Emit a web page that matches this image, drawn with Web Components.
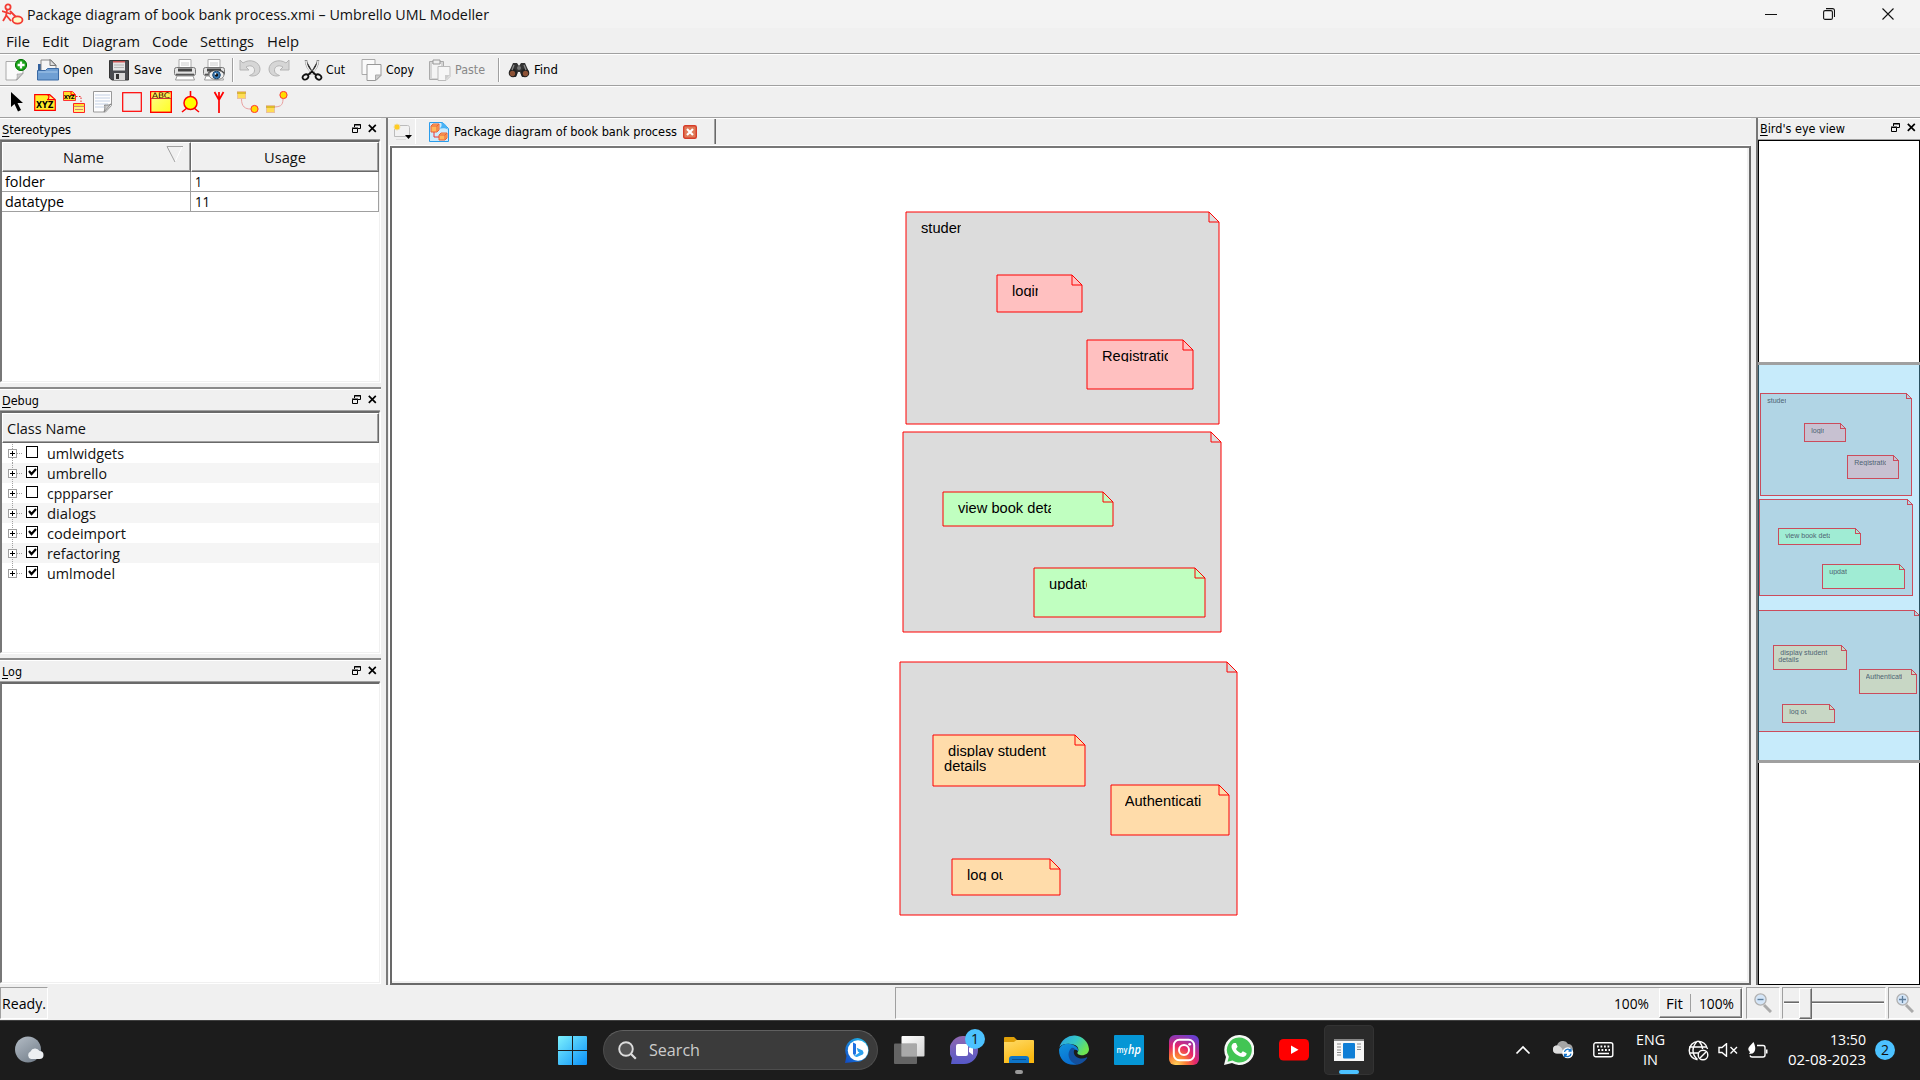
<!DOCTYPE html>
<html lang="en">
<head>
<meta charset="utf-8">
<title>Umbrello UML Modeller</title>
<style>
html,body{margin:0;padding:0;background:#f0f0f0;overflow:hidden}
</style>
</head>
<body>
<umbrello-desktop></umbrello-desktop>
<script>
const SEGOE='"Open Sans","Noto Sans",sans-serif';
const TAHOMA='"DejaVu Sans Condensed","DejaVu Sans",sans-serif';

/* Text stretched or squeezed horizontally to a fixed advance width. */
class FitText extends HTMLElement{
  connectedCallback(){
    if(this.shadowRoot)return;
    const w=+this.getAttribute('w'),size=this.getAttribute('size')||15;
    const fam=this.getAttribute('face')==='t'?TAHOMA:SEGOE;
    this.attachShadow({mode:'open'}).innerHTML=`<style>
      :host{display:block;flex:none;width:${w}px;height:20px;line-height:20px;font-family:${fam};font-size:${size}px;white-space:pre}
      span{display:inline-block;transform-origin:0 50%;white-space:pre}
      ::slotted(u){text-decoration-thickness:1px;text-underline-offset:2px}
      </style><span><slot></slot></span>`;
    const s=this.shadowRoot.querySelector('span'),m=s.getBoundingClientRect().width;
    if(m)s.style.transform=`scaleX(${w/m})`;
  }
}
customElements.define('fit-text',FitText);

const I={
app:[22,22,`<g fill="none" stroke="#f33b33" stroke-width="1.8"><circle cx="6" cy="4" r="2.6"/><path d="M5 7 4 13M0 8l9 3M4 13l-3 5M4 12l5 6M8 8l6 6"/><ellipse cx="15.5" cy="17" rx="5" ry="3.6" fill="#fffac8"/></g>`],
new:[22,22,`<path d="M1 2.500h17v12l-6 6.500H1z" fill="#fafafa" stroke="#aaa"/><path d="M18 14l-7 7c2-2 1-5 1-6 2 0 4 0 6-1z" fill="#ccc" stroke="#999" stroke-width=".6"/><circle cx="16" cy="6" r="5.600" fill="#19a319" stroke="#067206"/><path d="M16 2.600v7M12.600 6h7" stroke="#fff" stroke-width="2.300"/>`],
open:[22,22,`<path d="M1 5h5l2 3v10H1z" fill="#31609d"/><path d="M4 1h10l5 5v9H4z" fill="#f5f5f5" stroke="#888"/><path d="M13 .500l6 6h-6z" fill="#ddd" stroke="#777"/><path d="M.500 11.500h8l2-2h11v11.500h-21z" fill="#6f9fd3" stroke="#3a6aa5"/><path d="M1.500 13h19" stroke="#a8c9ea"/>`],
save:[20,22,`<path d="M.500 1.500h19v19.500H3l-2.500-2z" fill="#4a4c50" stroke="#333"/><path d="M4 2h12v9.500H4z" fill="#e4e4e4"/><path d="M4 2h12v1.500H4z" fill="#c55"/><path d="M5 6h10M5 8.500h10" stroke="#b4b4b4"/><path d="M5 14h11v7H5z" fill="#d8d8d8"/><path d="M7 15h3v5H7z" fill="#333"/>`],
print:[22,22,`<path d="M5 .500h12v9H5z" fill="#fff" stroke="#aaa"/><path d="M7 4h8M7 6h8" stroke="#ccc"/><rect x=".5" y="8.500" width="21" height="8" rx="2" fill="#e2e2e2" stroke="#777"/><path d="M4 9.500h14v3H4z" fill="#444"/><path d="M2 15.500h18" stroke="#555" stroke-width="1.600"/><path d="M3 17h16l1.500 4h-19z" fill="#fff" stroke="#999"/>`],
eye:[22,22,`<ellipse cx="13.500" cy="16" rx="7.500" ry="4.600" fill="#eee" stroke="#888"/><circle cx="13.500" cy="16" r="3.800" fill="#3a7cb8" stroke="#1b466e"/><circle cx="13.500" cy="16" r="1.700" fill="#111"/><circle cx="12.500" cy="14.800" r=".9" fill="#fff"/><path d="M5 14.500c4-5 13-5 16.500 0" fill="none" stroke="#444" stroke-width="1.200"/>`],
undo:[22,22,`<path d="M1 1v10h9L7 8c5-3 9 0 8.500 4-.4 2.500-2.500 3.500-5 4.500C15 18 21 16 21 10 21 3 11-1 4 4z" fill="#d6d6d6" stroke="#b4b4b4"/>`],
cut:[22,22,`<path d="M5 1c0 5 3 10 8 14M17 1c0 5-3 10-8 14" stroke="#8a8a8a" stroke-width="2.600"/><path d="M5 2c0 5 3 9 7 13M17 2c0 5-3 9-7 13" stroke="#f0f0f0" stroke-width="1.400"/><g fill="none" stroke="#111" stroke-width="1.800"><ellipse cx="4.500" cy="18" rx="3" ry="2.400" transform="rotate(-35 4.500 18)"/><ellipse cx="17.500" cy="18" rx="3" ry="2.400" transform="rotate(35 17.500 18)"/><path d="M7 16l4-3.500 4 3.500"/></g>`],
copy:[22,22,`<path d="M1 .500h13v15H1z" fill="#fafafa" stroke="#aaa"/><path d="M6 5.500h14v11l-5 5H6z" fill="#fafafa" stroke="#999"/><path d="M20 16l-5.500 5.500V16z" fill="#ccc" stroke="#aaa"/>`],
paste:[22,22,`<path d="M.500 2.500h14v18H.500z" fill="#d6d6d6" stroke="#aaa"/><path d="M3 5h9v14H3z" fill="#f4f4f4"/><path d="M4 1h7v4H4z" fill="#eee" stroke="#999"/><path d="M9 7.500h12v10l-4 4H9z" fill="#f6f6f6" stroke="#bbb"/><path d="M21 16l-5 5.500V16z" fill="#ccc"/>`],
find:[22,20,`<path d="M5 3h4l2 3 2-3h4l4 9-3 5h-4l-2-5h-2l-2 5H4l-3-5z" fill="#333"/><circle cx="5" cy="13" r="4.300" fill="#222"/><circle cx="17" cy="13" r="4.300" fill="#222"/><circle cx="4.500" cy="13.500" r="2.700" fill="#8d5236"/><circle cx="17.500" cy="13.500" r="2.700" fill="#8d5236"/><circle cx="11" cy="8" r="2" fill="#777"/><path d="M6 5l-2 5M16 5l2 5" stroke="#888" stroke-width="1.300"/>`],
arrow:[14,20,`<path d="M1 0v15l3.500-3L8 19.500l3-1.500-3.500-7H13z" fill="#000"/>`],
xyz:[22,17,`<path d="M.700.700h15l5.600 5v10.600H.700z" fill="#ffee2a" stroke="red" stroke-width="1.200"/><path d="M13 .700c3 0 2 5 0 5h8" fill="#fff28a" stroke="red" stroke-width="1.200"/><text x="10.700" y="14" text-anchor="middle" font-family="DejaVu Sans" font-weight="700" font-size="8.500" textLength="17.500" lengthAdjust="spacingAndGlyphs">XYZ</text>`],
xyz2:[22,22,`<path d="M.500.500h9l3 3v6H.500z" fill="#ffdf2a" stroke="#f33"/><path d="M8 .500v3h4" fill="none" stroke="#f00"/><text x="6.300" y="8.300" text-anchor="middle" font-family="DejaVu Sans" font-weight="700" font-size="5.500" textLength="11">XYZ</text><path d="M13 5.500h5V12" fill="none" stroke="#e22" stroke-dasharray="1.500 1.500"/><path d="M10.500 12.500h11v9h-11z" fill="#fff27d" stroke="#f22"/><path d="M11 13h10v2H11z" fill="#fd3"/><path d="M10.500 15.500h11M12 18.500h8" stroke="#c66" stroke-width=".8"/>`],
note:[19,22,`<path d="M.500.500h18v14l-6 6.500H.500z" fill="#fdfdfe" stroke="#999"/><path d="M2 4h15M2 7h15M2 10h15M2 13h13M2 16h9" stroke="#b4c4de" stroke-width=".8"/><path d="M18 13l-7 8c1-3 1-5 .5-7 3 .3 5 0 6.500-1z" fill="#ccc" stroke="#888"/>`],
rect:[20,20,`<rect x=".700" y=".700" width="18.600" height="18.600" fill="none" stroke="red" stroke-width="1.200"/>`],
abc:[22,22,`<defs><linearGradient id="g" x2="1" y2="1"><stop stop-color="#fffd90"/><stop offset="1" stop-color="#ff2"/></linearGradient></defs><rect x=".700" y=".700" width="20.600" height="20.600" fill="url(#g)" stroke="red" stroke-width="1.400"/><path d="M1 7.500h20" stroke="#c33"/><path d="M1.400 1.400h19v5.500h-19z" fill="#ffef50"/><text x="11" y="7" text-anchor="middle" font-family="DejaVu Sans" font-size="7.600" textLength="18" lengthAdjust="spacingAndGlyphs" fill="#300">ABC</text>`],
bulb:[19,22,`<path d="M9.500 0v5M1 21l5-4M18 21l-5-4" stroke="red" stroke-width="1.600"/><circle cx="9.500" cy="12" r="6.500" fill="#ff0" stroke="red" stroke-width="1.500"/>`],
fork:[12,22,`<path d="M6 22V1M1.500 1L6 9l4.500-8" fill="none" stroke="red" stroke-width="1.700"/>`],
link1:[22,22,`<path d="M4.500 8c0 8 4 10 9 10" fill="none" stroke="#e9a0a0"/><rect x=".5" y=".5" width="8" height="7" fill="#fd5" stroke="#e8c0a0"/><path d="M0 2h9" stroke="#b90"/><circle cx="17.500" cy="18" r="3.600" fill="#fd0" stroke="#f33"/>`],
link2:[22,22,`<path d="M17 8c0 7-3 8-11 8" fill="none" stroke="#e9a0a0"/><rect x=".5" y="14.500" width="8" height="7" fill="#fd5" stroke="#e8c0a0"/><path d="M0 16h9" stroke="#b90"/><circle cx="17.500" cy="4" r="3.600" fill="#fd0" stroke="#f33"/>`],
float:[9,9,`<g fill="none" stroke="#000"><path d="M2.500 3V.500h6v4H6M2 1h7" /><path d="M.500 4.500h5v4h-5zM0 4h6"/></g>`],
x:[9,9,`<path d="M.8.800l7 7M7.800.800l-7 7" stroke="#000" stroke-width="1.700"/>`],
sort:[18,17,`<path d="M16 1L9 16" stroke="#fff" fill="none"/><path d="M9 16L1 .500h16" stroke="#a0a0a0" fill="none"/>`],
newtab:[20,18,`<path d="M2.500 2.500h12c1.500 0 2 1 2 2v9h-15v-10z" fill="#f2f2f2" stroke="#bbb"/><path d="M3 16.500h10" stroke="#ddd"/><circle cx="4" cy="4" r="3" fill="#fc2" stroke="#eda"/><path d="M12 12h7l-3.500 4z" fill="#000"/>`],
pkg:[20,20,`<path d="M.500.500h13l6 6v13H.500z" fill="#cdebfb" stroke="#2a9dec"/><path d="M12 .500c6 1 6 5 7 7-3-2-7-1-9-1 3-1 3-4 2-6z" fill="#4ab3f5"/><g fill="#ffb85a" stroke="#e8603a"><path d="M2 4l2-2h6v6l-2 2H2z"/><path d="M2 4h6v6M8 4l2-2"/><path d="M10 13l2-2h6v5l-2 2h-6z"/><path d="M10 13h6v5M16 13l2-2"/></g><path d="M5 10v5h5" fill="none" stroke="#e33"/>`],
tabclose:[14,14,`<rect x=".7" y=".7" width="12.600" height="12.600" rx="1.500" fill="#e07a58" stroke="#d63c28" stroke-width="1.400"/><path d="M4 4l6 6M10 4l-6 6" stroke="#fff" stroke-width="2.200"/>`],
min:[12,12,`<path d="M0 6.500h12" stroke="#111"/>`],
max:[12,12,`<rect x=".6" y="2.600" width="8.800" height="8.800" rx="1.500" fill="none" stroke="#111" stroke-width="1.100"/><path d="M3 .6h6.500c1.200 0 2 .8 2 2V9" fill="none" stroke="#111" stroke-width="1.100"/>`],
close:[12,12,`<path d="M.500.500l11 11M11.500.500l-11 11" stroke="#111" stroke-width="1.100"/>`],
zout:[18,20,`<path d="M10 12l7 7" stroke="#aaa" stroke-width="3"/><circle cx="6.500" cy="6.500" r="5.600" fill="#d4e5f7" stroke="#b0b0b0" stroke-width="1.300"/><path d="M3.500 6.500h6" stroke="#5e7e9c" stroke-width="1.400"/>`],
zin:[18,20,`<path d="M10 12l7 7" stroke="#aaa" stroke-width="3"/><circle cx="6.500" cy="6.500" r="5.600" fill="#d4e5f7" stroke="#b0b0b0" stroke-width="1.300"/><path d="M3 6.500h7M6.500 3v7" stroke="#5e7e9c" stroke-width="1.300"/>`],
weather:[30,28,`<defs><linearGradient id="g" x2=".7" y2="1"><stop stop-color="#b4bdc6"/><stop offset="1" stop-color="#77828e"/></linearGradient></defs><circle cx="13" cy="13.500" r="13" fill="url(#g)"/><path d="M16 23a4 4 0 0 1-.5-7.500 5 5 0 0 1 9-.5 4 4 0 0 1 0 8z" fill="#eceff2"/>`],
win:[29,29,`<defs><linearGradient id="g" x2="1" y2="1"><stop stop-color="#7df1fd"/><stop offset="1" stop-color="#0a90f8"/></linearGradient></defs><path d="M0 1q0-1 1-1h13v14H0zM15 0h13q1 0 1 1v13H15zM0 15h14v14H1q-1 0-1-1zM15 15h14v13q0 1-1 1H15z" fill="url(#g)"/>`],
search:[19,19,`<circle cx="8" cy="8" r="6.800" fill="#555" stroke="#ddd" stroke-width="1.900"/><path d="M12.800 12.800l5 5" stroke="#ddd" stroke-width="2.200"/>`],
bing:[25,25,`<defs><linearGradient id="g" x1="1" x2="0" y2="1"><stop stop-color="#22c3ee"/><stop offset="1" stop-color="#1148c4"/></linearGradient></defs><path d="M12.500 0a12.500 12 0 1 1-3 24L0 25l1.500-7A12.500 12.500 0 0 1 12.500 0z" fill="url(#g)"/><circle cx="13" cy="12.500" r="10.200" fill="#fff"/><path d="M8 4.500l3 1.500v9.500l-1 1.800L8 16z" fill="#1e6fe0"/><path d="M10 17.500l4.500-3-1.500-.8-1.300-4 6 2.800q1.500 2 0 4L12 19q-2.500.5-4-3z" fill="#2ba0ee"/>`],
taskview:[31,29,`<defs><linearGradient id="g" x2="1" y2="1"><stop stop-color="#fff"/><stop offset="1" stop-color="#d4d4d4"/></linearGradient></defs><rect x="7.500" width="23" height="20.500" rx="1" fill="url(#g)"/><rect y="7.500" width="23" height="20.500" rx="1" fill="#777" opacity=".8"/><path d="M7.500 8H23v12.500H7.500z" fill="#a9a9a9"/>`],
chat:[29,29,`<defs><linearGradient id="g" x2="0" y2="1"><stop stop-color="#9068b0"/><stop offset="1" stop-color="#5558c8"/></linearGradient></defs><path d="M14 0a14 14 0 1 1 0 28H1l1-6A14 14 0 0 1 14 0z" fill="url(#g)"/><rect x="6" y="8" width="12" height="12" rx="2" fill="#fff"/><path d="M19 12l4-3v10l-4-3z" fill="#fff"/>`],
folder:[30,27,`<defs><linearGradient id="g" x2=".5" y2="1"><stop stop-color="#ffdb68"/><stop offset="1" stop-color="#fbb810"/></linearGradient></defs><path d="M0 1q0-1 1-1h9l3 3-2 4H0z" fill="#e0a008"/><path d="M0 5h10l2.500-2H29q1 0 1 1v22H0z" fill="url(#g)"/><path d="M5 26v-4q0-3 3-3h14q3 0 3 3v4z" fill="#0e75c8"/><path d="M8 22.500h14" stroke="#0a4f90"/>`],
edge:[30,30,`<defs><linearGradient id="g" x2="1" y2=".5"><stop offset=".1" stop-color="#2ba4e2"/><stop offset=".55" stop-color="#35c8c4"/><stop offset="1" stop-color="#6ee452"/></linearGradient><linearGradient id="b" x2=".4" y2="1"><stop stop-color="#0f93dd"/><stop offset="1" stop-color="#0a6fd0"/></linearGradient></defs><path d="M.5 12A15 15 0 0 1 30 14c0 5-5 7-9 6-2-.5-3-1.500-2.500-2.500 2-3 .5-7-4-8C9 8 3 9 .5 12z" fill="url(#g)"/><path d="M0 15C1 9 8 7.500 13.500 9.500c4 1.500 6.500 4.500 5.500 7-1-3-7-3-8 2-.7 4 2 8.500 7 11C8 31.500 0 25 0 15z" fill="url(#b)"/><path d="M12.500 13c-5 4-4 14 5.500 16.700 4-.7 8-3 10.200-6.700.3-.6-.3-.8-.8-.5-5 2.500-11 .5-12.400-4-.5-2 0-3.500 1-4.500-1.200-1-2.500-1.500-3.500-1z" fill="#134f9d"/>`],
hp:[30,30,`<rect width="30" height="30" rx="1" fill="#0596d5"/><text x="2.500" y="17.500" font-family="Open Sans" font-weight="600" font-size="9" fill="#fff" textLength="11" lengthAdjust="spacingAndGlyphs">my</text><text x="14" y="18.500" font-family="Open Sans" font-weight="600" font-style="italic" font-size="13" fill="#fff" textLength="13" lengthAdjust="spacingAndGlyphs">hp</text>`],
insta:[30,30,`<defs><radialGradient id="g" cx=".25" cy="1" r="1.100"><stop stop-color="#ffd65a"/><stop offset=".3" stop-color="#fb7a35"/><stop offset=".58" stop-color="#e5266c"/><stop offset="1" stop-color="#6a3fd0"/></radialGradient></defs><rect width="30" height="30" rx="6" fill="url(#g)"/><g fill="none" stroke="#fff" stroke-width="2"><rect x="4.800" y="4.800" width="20.400" height="20.400" rx="5.500"/><circle cx="15" cy="15" r="5"/></g><circle cx="20.700" cy="9.300" r="1.400" fill="#fff"/>`],
wa:[30,30,`<path d="M15 0a15 15 0 1 1-7 28L0 30l2-8A15 15 0 0 1 15 0z" fill="#f4f8f4"/><path d="M15 2.500a12.500 12.500 0 1 1-6.500 23L3.500 26.800l1.400-5A12.500 12.500 0 0 1 15 2.500z" fill="#42c554"/><path d="M10 8l2 0 1.600 3.800L12 14c1 2 3 3.500 5 4.300l1.800-2 3.800 2c0 3-3 4-5 3.500C12 20.500 8 16 7.500 12c0-2 1-3.500 2.500-4z" fill="#fff"/>`],
yt:[30,22,`<rect width="30" height="21.500" rx="4.500" fill="#f00"/><path d="M12 6.500l7.500 4.300L12 15z" fill="#fff"/>`],
uml:[30,22,`<rect width="30" height="22" fill="#f7f7f7"/><path d="M0 0h30v2H0z" fill="#888"/><path d="M3 5h4M3 8h4M3 11h4M3 13.500h4M3 16h4M23 5h4M23 8h4M23 10.500h4" stroke="#888"/><rect x="9" y="4" width="12" height="15.500" rx="1" fill="#0f7ed6"/>`],
chev:[16,10,`<path d="M1.500 8.500L8 2l6.500 6.500" fill="none" stroke="#fff" stroke-width="1.700"/>`],
cloud:[21,18,`<path d="M4 12.500a4 4 0 0 1 0-8A6 6 0 0 1 15 3a5 5 0 0 1 2 9.500z" fill="#a5a5a5"/><path d="M4 12.500a4 4 0 0 1 0-8c3 0 5 2 7 8z" fill="#ddd"/><circle cx="14.800" cy="11.800" r="5.500" fill="#fff"/><path d="M11.500 11a3.400 3.400 0 0 1 6-1.500M18 12.600a3.400 3.400 0 0 1-6 1.700M18 7.500v2.500h-2.500M11.500 16v-2.500H14" fill="none" stroke="#1673c8" stroke-width="1.300"/>`],
kbd:[21,16,`<rect x=".8" y=".8" width="19" height="14" rx="2" fill="none" stroke="#fff" stroke-width="1.400"/><path d="M4 4.500h13M5 8h12" stroke="#fff" stroke-width="1.800" stroke-dasharray="1.800 1.700"/><path d="M5 11.500h11" stroke="#fff" stroke-width="1.500"/>`],
globe:[21,21,`<g fill="none" stroke="#fff" stroke-width="1.400"><path d="M19.500 9a9.200 9.200 0 1 0-10 10.700M1 7h18M1 13h9M9.500 1c-6 6-6 13 0 18.500M10.500 1c3 3 4 6 4 8"/><circle cx="15" cy="15" r="4.800"/><path d="M12 18l6-6"/></g>`],
mute:[20,14,`<path d="M1 4.500h3l4.500-3.800v12.600L4 9.500H1z" fill="none" stroke="#fff" stroke-width="1.400"/><path d="M12.500 4l6.500 6.500M19 4l-6.500 6.500" stroke="#fff" stroke-width="1.400"/>`],
batt:[21,17,`<path d="M10 3.500h6q2 0 2 2v7.500q0 2-2 2H5q-1.500 0-2-1.500" fill="none" stroke="#fff" stroke-width="1.400"/><path d="M19 7.500h1.500v4H19z" fill="#fff"/><path d="M6.500 0c2 4 3 9-1 11.500l-3.500.5 1-2C-1 6 3 4.500 6.500 0z" fill="#fff"/>`]
};
I.preview=[22,22,I.print[2]+I.eye[2]];
I.redo=[22,22,`<g transform="matrix(-1 0 0 1 22 0)">${I.undo[2]}</g>`];

class UiIcon extends HTMLElement{
  connectedCallback(){
    if(this.shadowRoot)return;
    const [w,h,body]=I[this.getAttribute('name')];
    this.attachShadow({mode:'open'}).innerHTML=`<style>:host{display:block;flex:none;width:${w}px;height:${h}px}svg{display:block}</style><svg width="${w}" height="${h}" viewBox="0 0 ${w} ${h}">${body}</svg>`;
  }
}
customElements.define('ui-icon',UiIcon);

/* Fixed-width slot of a bar; content is vertically centred. */
class BarCell extends HTMLElement{
  connectedCallback(){
    if(this.shadowRoot)return;
    this.attachShadow({mode:'open'}).innerHTML=`<style>:host{display:flex;flex:none;align-items:center;width:${this.getAttribute('w')}px}</style><slot></slot>`;
  }
}
customElements.define('bar-cell',BarCell);
const ic=(n,w)=>`<bar-cell w="${w}"><ui-icon name="${n}"></ui-icon></bar-cell>`;
const tx=(t,tw,w,size,face,extra='')=>`<bar-cell w="${w}"><fit-text w="${tw}" size="${size}" face="${face||''}" ${extra}>${t}</fit-text></bar-cell>`;

function define(name,html){
  customElements.define(name,class extends HTMLElement{
    connectedCallback(){ if(!this.shadowRoot)this.attachShadow({mode:'open'}).innerHTML=typeof html==='function'?html(this):html; }
  });
}

define('title-bar',`<style>:host{display:flex;align-items:center;height:28px;background:#f3f3f3;padding-left:2px;color:#111}.g{flex:1}</style>
${ic('app',25)}${tx('Package diagram of book bank process.xmi – Umbrello UML Modeller',462,470,14.7)}<div class="g"></div>${ic('min',58)}${ic('max',59)}${ic('close',38)}`);

define('menu-bar',`<style>:host{display:flex;align-items:center;height:25px;padding-left:6px;background:#f0f0f0;border-bottom:1px solid #a0a0a0;color:#111}</style>
${[['File',24,36],['Edit',27,39.5],['Diagram',58,70.5],['Code',36,48],['Settings',54,66.5],['Help',32,40]].map(a=>tx(a[0],a[1],a[2],15)).join('')}`);

const sep=w=>`<bar-cell w="${w}"><i></i></bar-cell>`;
define('main-toolbar',`<style>:host{display:flex;align-items:center;box-sizing:border-box;height:32px;padding-left:5px;border-top:1px solid #fff;border-bottom:1px solid #a0a0a0;color:#000}i{width:1px;height:24px;background:#a0a0a0;border-right:1px solid #fff}</style>
${ic('new',32)}${ic('open',26)}${tx('Open',30,46,13,'t')}${ic('save',25)}${tx('Save',28,40,13,'t')}${ic('print',29)}${ic('preview',29)}${sep(7)}${ic('undo',29)}${ic('redo',33)}${ic('cut',25)}${tx('Cut',19,35,13,'t')}${ic('copy',25)}${tx('Copy',28,43,13,'t')}${ic('paste',26)}${tx('Paste',30,43,13,'t','style="color:#888"')}${sep(10)}${ic('find',26)}${tx('Find',24,30,13,'t')}`);

define('draw-toolbar',`<style>:host{display:flex;align-items:center;box-sizing:border-box;height:32px;padding-left:10px;border-top:1px solid #fff;border-bottom:1px solid #a0a0a0}</style>
${ic('arrow',24)}${ic('xyz',29)}${ic('xyz2',30)}${ic('note',29)}${ic('rect',28)}${ic('abc',31)}${ic('bulb',32)}${ic('fork',24)}${ic('link1',29)}${ic('link2',29)}`);

define('dock-title',el=>`<style>:host{display:flex;align-items:center;height:21px;padding:0 0 0 2px;color:#000;border-top:1px solid #fff}.g{flex:1}ui-icon{margin-bottom:3px}ui-icon+ui-icon{margin:0 4px 3px 7px}</style>
<fit-text w="${el.getAttribute('w')}" size="12.5" face="t"><u>${el.getAttribute('name')[0]}</u>${el.getAttribute('name').slice(1)}</fit-text><div class="g"></div><ui-icon name="float"></ui-icon><ui-icon name="x"></ui-icon>`);

define('sunken-box',`<style>:host{display:block;box-sizing:border-box;background:#fff;border:solid;border-width:2px 1px 1px 2px;border-color:#696969 #f0f0f0 #f0f0f0 #696969;border-left-color:#777;box-shadow:1px 1px 0 #fff,0 -1px 0 #a0a0a0;margin-right:1px}</style><slot></slot>`);

define('header-cell',`<style>:host{display:flex;align-items:center;box-sizing:border-box;height:30px;background:#f0f0f0;border:1px solid #fff;border-right-color:#696969;border-bottom-color:#696969;box-shadow:inset -1px -1px 0 #a0a0a0;color:#111}</style><slot></slot>`);

define('stereotype-table',`<style>
.h,.r{display:flex}.h header-cell:nth-child(1){width:189px}.h header-cell:nth-child(2){width:188px}
.r{height:19px;border-bottom:1px solid #a0a0a0;width:377px;box-sizing:content-box}
.r div{box-sizing:border-box;border-right:1px solid #a0a0a0;display:flex;align-items:center;padding:0 0 2px 3px}.r div:nth-child(1){width:189px}.r div:nth-child(2){width:188px;padding-left:4px}
</style><div class="h"><header-cell><fit-text w="41" style="margin-left:60px">Name</fit-text><ui-icon name="sort" style="margin:-6px 0 0 62px"></ui-icon></header-cell><header-cell><fit-text w="42" style="margin-left:72px">Usage</fit-text></header-cell></div>
<div class="r"><div><fit-text w="40">folder</fit-text></div><div><fit-text w="7">1</fit-text></div></div>
<div class="r"><div><fit-text w="59">datatype</fit-text></div><div><fit-text w="15">11</fit-text></div></div>`);

define('tree-row',el=>`<style>:host{display:flex;align-items:center;height:20px;color:#111}svg{display:block;flex:none}</style>
<svg width="45" height="20" shape-rendering="crispEdges"><path d="M10.500 ${el.hasAttribute('first')?1:0}V${el.hasAttribute('last')?10:20}M15 10.500h6" stroke="#a0a0a0" stroke-dasharray="1 1"/><rect x="6.500" y="6.500" width="8" height="8" fill="#fff" stroke="#a0a0a0"/><path d="M8 10.500h5M10.500 8v5" stroke="#000"/><rect x="24.500" y="3.500" width="11" height="11" fill="#fff" stroke="#000"/>${el.hasAttribute('on')?'<path d="M27 8l2.500 3L34 6" fill="none" stroke="#000" stroke-width="2.200" shape-rendering="auto"/>':''}</svg><fit-text w="${el.getAttribute('w')}">${el.getAttribute('name')}</fit-text>`);

define('left-docks',`<style>:host{display:block;width:381px;flex:none;box-sizing:border-box}
.s{height:3px;border-bottom:2px solid #8a8a8a;margin-top:2px}tree-row:nth-of-type(even){background:#f5f5f5}sunken-box{overflow:hidden}</style>
<dock-title name="Stereotypes" w="69"></dock-title><sunken-box style="height:242px"><stereotype-table></stereotype-table></sunken-box>
<div class="s"></div>
<dock-title name="Debug" w="37"></dock-title><sunken-box style="height:242px"><header-cell style="width:377px"><fit-text w="79" style="margin-left:4px">Class Name</fit-text></header-cell>
<tree-row name="umlwidgets" w="77" first></tree-row><tree-row name="umbrello" w="60" on></tree-row><tree-row name="cppparser" w="66"></tree-row><tree-row name="dialogs" w="49" on></tree-row><tree-row name="codeimport" w="79" on></tree-row><tree-row name="refactoring" w="73" on></tree-row><tree-row name="umlmodel" w="68" on last></tree-row></sunken-box>
<div class="s"></div><dock-title name="Log" w="20"></dock-title><sunken-box style="height:301px"></sunken-box>`);

/* A note shape of the diagram. Coordinates are scene units; "scale" shrinks it for the overview. */
define('uml-note',el=>{
  const n=k=>+el.getAttribute(k),s=n('scale'),mini=s!==1;
  const x=n('x')*s,y=n('y')*s,w=n('w')*s,h=n('h')*s,f=10*s;
  const X=mini?Math.floor(x):x,Y=mini?Math.floor(y):y,W=Math.floor(x+w)-X,H=Math.floor(y+h)-Y,F=mini?5:f;
  const lines=el.getAttribute('label').split('|'),fs=14.67*s,clip=n('clip')*s,dx=n('dx');
  return `<style>:host{position:absolute;left:${X-1}px;top:${Y-1}px;width:${W+3}px;height:${H+3}px}svg{display:block;position:absolute;inset:0}
  p{position:absolute;margin:0;font:${fs}px/${16*s}px "Liberation Sans",Arial,sans-serif;white-space:pre;overflow:hidden;color:${mini?'#4e6473':'#000'}}</style>
  <svg width="${W+3}" height="${H+3}" ${mini?'shape-rendering="crispEdges"':''}><g transform="translate(${mini?1.5:1} ${mini?1.5:1})" fill="${el.getAttribute('fill')}" stroke="${mini?'#cb4c5c':'#f00'}"><path d="M0 0H${W-F}L${W} ${F}V${H}H0z"/><path d="M${W-F} 0V${F}H${W}" fill="none"/></g></svg>
  ${lines.map((t,i)=>t?`<p style="left:${(i?11:15+dx)*s+1}px;top:${(i?23:8)*s+1}px;height:${(i?16:14)*s}px;${i?'':`width:${clip}px`}">${t}</p>`:'').join('')}`;
});
const NOTES=[
[906,212,313,212,'g','student',40],[997,275,85,37,'p','login',26],[1087,340,106,49,'p','Registration',66],
[903,432,318,200,'g','',0],[943,492,170,34,'n','view book details',93],[1034,568,171,49,'n','update',37.5],
[900,662,337,253,'g','',0],[933,735,152,51,'o','display student|details',100],[1111,785,118,50,'o','Authentication',76.5,-1.3],[952,859,108,36,'o','log out',36]];
const scene=(s,ox,oy,c)=>NOTES.map(a=>`<uml-note scale="${s}" x="${a[0]-ox}" y="${a[1]-oy}" w="${a[2]}" h="${a[3]}" fill="${c[a[4]]}" label="${a[5]}" clip="${a[6]}" dx="${a[7]||0}"></uml-note>`).join('');

define('diagram-canvas',`<style>:host{display:block;position:relative;flex:1;background:#fff;overflow:hidden}</style>${scene(1,392,148,{g:'#dcdcdc',p:'#ffc0c0',n:'#c0ffc0',o:'#ffdcaa'})}`);

define('diagram-area',`<style>:host{display:flex;flex-direction:column;box-sizing:border-box;margin-left:5px;width:1365px;flex:none;height:867px;border-left:2px solid #7a7a7a}
.t{display:flex;align-items:center;height:25px;border-top:1px solid #fff;padding-left:5px;color:#000}.t i{width:1px;height:25px;background:#696969;border-left:1px solid #a0a0a0}
.t fit-text{margin-top:1px}
.f{flex:1;display:flex;box-sizing:border-box;margin:2px 0 0 2px;border:2px solid #696969;border-top-color:#777;border-right-width:2px;box-shadow:-1px -1px 0 #fff;min-height:0}
.in{flex:1;display:flex;border-right:2px solid #f0f0f0;border-bottom:2px solid #f0f0f0}</style>
<div class="t">${ic('newtab',20)}<bar-cell w="16"><b style="margin-left:2px;width:1px;height:25px;background:#fff"></b></bar-cell>${ic('pkg',25)}${tx('Package diagram of book bank process',223,229,13,'t')}${ic('tabclose',31)}<i></i></div>
<div class="f"><div class="in"><diagram-canvas></diagram-canvas></div></div>`);

define('birds-eye',`<style>:host{display:block;flex:1;margin-left:5px;border-left:2px solid #777;height:867px;box-sizing:border-box;overflow:hidden}
dock-title{height:20px;border-bottom:1px solid #a0a0a0}.v{box-sizing:border-box;height:845px;background:#fff;border:1px solid #000;display:flex;flex-direction:column}
.w{position:relative;height:395px;background:#c7ebfb;margin:221px -1px 0;border:solid #a0a0a0;border-width:3px 0;overflow:hidden}
.c{position:absolute;inset:0;border:solid #2a5060;border-width:0 1px;z-index:3}</style>
<dock-title name="Bird's eye view" w="85"></dock-title><div class="v"><div class="w">${scene(.4815,(1758-1324.3)/.4815,(365-291.3)/.4815,{g:'#b1d5e5',p:'#c7c1d1',n:'#a0ecd4',o:'#c8d7c5'})}<div class="c"></div></div></div>`);

define('status-bar',`<style>:host{display:flex;height:35px;box-sizing:border-box;padding-top:2px;color:#000}
div{box-sizing:border-box;height:32px;border:1px solid #a0a0a0;border-right-color:#fff;border-bottom-color:#fff;display:flex;align-items:center;flex:none}
.btn{border:solid 1px;border-color:#fff #696969 #696969 #fff;box-shadow:inset -1px -1px #a0a0a0;height:30px}.sp{width:1px;height:18px;background:#a0a0a0;border:0;margin:0 8px 0 7px}
s{display:block;height:3px;flex:1;box-sizing:border-box;border-top:1px solid #a0a0a0;background:#696969;border-bottom:1px solid #fff;margin:-2px 1px 0}</style>
<div style="width:48px;padding-left:1px"><fit-text w="44">Ready.</fit-text></div>
<div style="width:848px;margin-left:847px;justify-content:flex-end"><fit-text w="35" style="margin-right:10px">100%</fit-text><div class="btn" style="width:83px;padding-left:6px"><fit-text w="17">Fit</fit-text><div class="sp"></div><fit-text w="35">100%</fit-text></div></div>
<div style="width:34px;margin-left:3px;padding-left:7px"><ui-icon name="zout"></ui-icon></div>
<div style="width:104px;margin-left:2px"><s style="flex:none;width:15px;margin-right:0"></s><div class="btn" style="width:13px;height:31px"></div><s style="margin-left:0"></s></div>
<div style="width:33px;margin-left:2px;padding-left:7px;border-right:0"><ui-icon name="zin"></ui-icon></div>`);

define('search-box',`<style>:host{display:flex;align-items:center;box-sizing:border-box;width:275px;height:40px;border-radius:20px;background:#3b3b3b;border:1px solid #4d4d4d;border-top-color:#606060;padding:0 7px 0 14px;color:#ccc}.g{flex:1}</style><ui-icon name="search"></ui-icon><fit-text w="51" size="16" style="margin:0 0 0 12px">Search</fit-text><div class="g"></div><ui-icon name="bing"></ui-icon>`);

define('count-badge',`<style>:host{display:flex;align-items:center;justify-content:center;width:20px;height:20px;border-radius:50%;background:#4cc2ff;color:#111;font:14px/20px "Open Sans",sans-serif}</style><slot></slot>`);

define('task-icon',el=>`<style>:host{display:flex;position:relative;align-items:center;justify-content:center;width:50px;height:50px;margin-right:5px;border-radius:5px;box-sizing:border-box;flex:none}
:host([active]){background:#2a2a2a;box-shadow:inset 0 0 0 1px #333}
i{position:absolute;bottom:1px;left:50%;transform:translateX(-50%);height:4px;border-radius:2px}.run{width:8px;background:#999}.act{width:20px;background:#4cc2ff}
::slotted(count-badge){position:absolute;left:26px;top:4px}</style><ui-icon name="${el.getAttribute('name')}"></ui-icon>${el.hasAttribute('run')?'<i class="run"></i>':''}${el.hasAttribute('active')?'<i class="act"></i>':''}<slot></slot>`);

define('task-bar',`<style>:host{display:flex;align-items:center;height:60px;box-sizing:border-box;background:#1c1c1c;border-top:1px solid #404040;color:#fff;padding:0 0 1px 15px}
.st{display:flex;flex-direction:column;flex:none}.g{flex:1}</style>
${ic('weather',543)}${ic('win',45)}<search-box></search-box><bar-cell w="6"></bar-cell>
<task-icon name="taskview"></task-icon><task-icon name="chat"><count-badge>1</count-badge></task-icon><task-icon name="folder" run></task-icon><task-icon name="edge"></task-icon><task-icon name="hp"></task-icon><task-icon name="insta"></task-icon><task-icon name="wa"></task-icon><task-icon name="yt"></task-icon><task-icon name="uml" active></task-icon>
<div class="g"></div>${ic('chev',38)}${ic('cloud',40)}${ic('kbd',43)}
<div class="st" style="width:52px"><fit-text w="29" size="14.5">ENG</fit-text><fit-text w="15" size="14.5" style="margin-left:7px">IN</fit-text></div>
${ic('globe',30)}${ic('mute',29)}${ic('batt',41)}
<div class="st" style="width:87px"><fit-text w="36" size="14.5" style="margin-left:42px">13:50</fit-text><fit-text w="78" size="14.5">02-08-2023</fit-text></div><count-badge style="margin-right:25px">2</count-badge>`);

define('umbrello-desktop',`<style>:host{display:flex;flex-direction:column;width:1920px;height:1080px;background:#f0f0f0;overflow:hidden}.m{display:flex;height:867px;flex:none}title-bar,menu-bar,main-toolbar,draw-toolbar,status-bar,task-bar{flex:none}</style>
<title-bar></title-bar><menu-bar></menu-bar><main-toolbar></main-toolbar><draw-toolbar></draw-toolbar>
<div class="m"><left-docks></left-docks><diagram-area></diagram-area><birds-eye></birds-eye></div>
<status-bar></status-bar><task-bar></task-bar>`);
</script>
</body>
</html>
